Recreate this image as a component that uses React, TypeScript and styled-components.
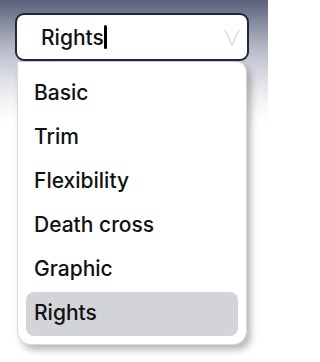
import React from "react";
import styled, { createGlobalStyle } from "styled-components";

const Global = createGlobalStyle`
  html, body { margin: 0; padding: 0; }
  body {
    width: 268px;
    height: 362px;
    overflow: hidden;
    font-family: Inter, "Open Sans", sans-serif;
    background: #ffffff;
  }
`;

const Page = styled.div`
  width: 268px;
  height: 362px;
  box-sizing: border-box;
  padding: 13px 19px 0 15px;
  background: linear-gradient(
    to bottom,
    #5a607a 0px,
    #8a8fa2 25px,
    #b9bcc8 50px,
    #dfe0e6 80px,
    #f6f6f8 105px,
    #ffffff 125px
  );
`;

const Field = styled.div`
  box-sizing: border-box;
  width: 234px;
  height: 48px;
  border: 2px solid #1e2640;
  border-radius: 9px;
  background: #ffffff;
  display: flex;
  align-items: center;
  padding: 0 7px 0 24px;
`;

const Value = styled.span`
  font-size: 21px;
  font-weight: 450;
  color: #111111;
  line-height: 1;
`;

const Caret = styled.span`
  display: inline-block;
  width: 3px;
  height: 24px;
  border-radius: 1.5px;
  background: #000000;
`;

const Spacer = styled.div`
  flex: 1;
`;

const Chevron = styled.svg`
  width: 16px;
  height: 17px;
  display: block;
`;

const Panel = styled.ul`
  list-style: none;
  margin: 1px 0 0 2px;
  box-sizing: border-box;
  width: 230px;
  height: 283px;
  padding: 10px 8px 9px 8px;
  background: #ffffff;
  border: 1.5px solid #dcd9dc;
  border-top: none;
  border-radius: 0 10px 14px 14px;
  box-shadow: 4px 5px 7px rgba(0, 0, 0, 0.28);
`;

const Item = styled.li<{ $selected?: boolean }>`
  box-sizing: border-box;
  height: 44px;
  display: flex;
  align-items: center;
  padding: 0 0 3px 8px;
  border-radius: 8px;
  font-size: 21px;
  font-weight: 450;
  color: #111111;
  background: ${(p) => (p.$selected ? "#d3d4d9" : "transparent")};
`;

const options = ["Basic", "Trim", "Flexibility", "Death cross", "Graphic", "Rights"];

export default function App() {
  const selected = "Rights";
  return (
    <>
      <Global />
      <Page>
        <Field>
          <Value>{selected}</Value>
          <Caret />
          <Spacer />
          <Chevron viewBox="0 0 16 17" fill="none">
            <path d="M1 1 L8 16 L15 1" stroke="#c9c9ce" strokeWidth="1" />
          </Chevron>
        </Field>
        <Panel>
          {options.map((o) => (
            <Item key={o} $selected={o === selected}>
              {o}
            </Item>
          ))}
        </Panel>
      </Page>
    </>
  );
}
